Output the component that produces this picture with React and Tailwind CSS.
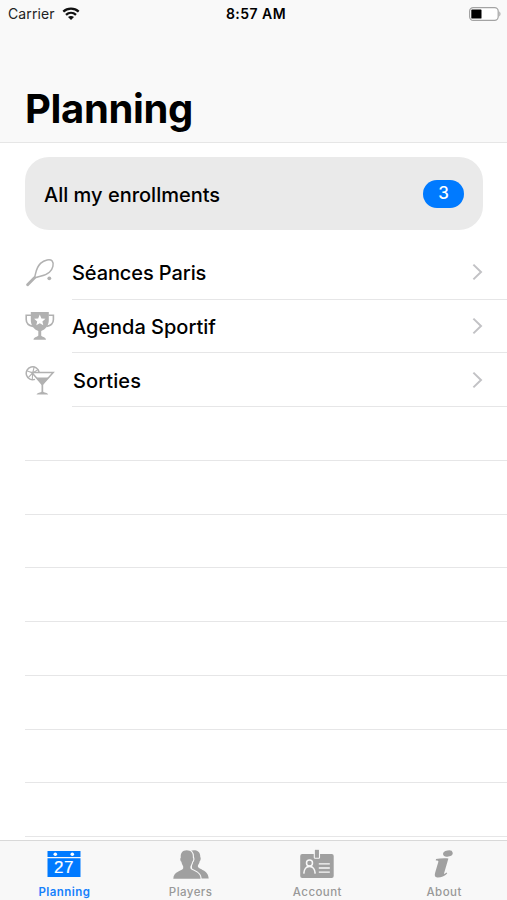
import React, { useState } from "react";

const RacketIcon = () => (
  <svg width="30" height="30" viewBox="0 0 30 30" fill="none" stroke="#b1b1b1">
    <path
      d="M9.2 20.2C11.2 16 10.2 10.8 15.5 5.4C19.5 1.7 25.2 .8 27.2 3C29.2 5.4 28 11 24.4 14.2C19.4 18.6 14.4 17.6 9.2 20.2Z"
      strokeWidth="1.5"
    />
    <path d="M9.5 19.7L2.6 26.8" strokeWidth="2.9" strokeLinecap="round" />
    <circle cx="24.3" cy="20.3" r="1.9" fill="#b1b1b1" stroke="none" />
  </svg>
);

const TrophyIcon = () => (
  <svg width="30" height="30" viewBox="0 0 30 30" fill="#b1b1b1">
    <path d="M5.8 1H23.8V9C23.8 14.5 20.5 18.5 16.2 20V24.5C16.4 26 20.8 25.6 21 28.7H8.5C8.7 25.6 13 26 13.3 24.5V20C9 18.5 5.8 14.5 5.8 9Z" />
    <path
      d="M6 4.2H1.2V8.5C1.2 12.5 4 14.6 8 15.4M23.6 4.2H28.4V8.5C28.4 12.5 25.6 14.6 21.6 15.4"
      fill="none"
      stroke="#b1b1b1"
      strokeWidth="1.6"
    />
    <path
      d="M14.8 3.6L16.4 7.4L20.5 7.7L17.4 10.4L18.3 14.3L14.8 12.2L11.3 14.3L12.2 10.4L9.1 7.7L13.2 7.4Z"
      fill="#fff"
    />
  </svg>
);

const CocktailIcon = () => (
  <svg width="30" height="31" viewBox="0 0 30 31" fill="none" stroke="#b1b1b1" strokeWidth="1.5">
    <path d="M10 14.4A6.5 6.5 0 1 1 14.1 7" />
    <path d="M7.7 8L1.8 5.8M7.7 8L9.2 1.8M7.7 8L3.2 12.6M7.7 8L13 4.6M7.7 8L7.3 14.2" strokeWidth="1.1" />
    <path d="M6.8 7.4H28.2L17.3 19.6Z" fill="#fff" />
    <path d="M11 12.6H23.8L18.2 19.3V26.5C18.5 27.8 23 27.6 23.2 29.6H11.6C11.8 27.6 16.2 27.8 16.5 26.5V19.3Z" fill="#b1b1b1" stroke="none" />
  </svg>
);

const CalendarIcon = () => (
  <svg width="34" height="30" viewBox="0 0 34 30">
    <path d="M.5 2H33.5V8H.5ZM.5 9.2H33.5V28H.5Z" fill="#007aff" />
    <circle cx="8.3" cy="5.3" r="1.8" fill="#fff" />
    <circle cx="25.3" cy="5.3" r="1.8" fill="#fff" />
    <text
      x="17"
      y="24"
      textAnchor="middle"
      fill="#fff"
      fontSize="17"
      fontWeight="400"
      fontFamily="Liberation Sans, Arial, sans-serif"
      stroke="#fff"
      strokeWidth=".2"
    >
      27
    </text>
  </svg>
);

const PlayersIcon = () => (
  <svg width="36" height="30" viewBox="0 0 36 30" fill="#a0a0a0">
    <path d="M17.5 2C21 .6 27.5 1 27.3 8C28.2 9 27.6 11.5 26.7 12.3C26.5 14.5 25 16 24.8 17C24.8 20.5 35.5 20.5 35.7 29.5H20Z" />
    <path
      d="M13.7 1.2C18 1.2 20.3 4 19.8 8.4C20.8 9.4 20.3 12 19.2 12.7C18.9 15 17.6 16.4 17.4 17.5V19.3C18.5 22.2 27.4 22 27.6 29.7H.3C.4 22.2 9.4 22.2 10.2 19.3V17.5C9.8 16.2 8.7 15 8.4 12.7C7.2 12 6.8 9.3 7.8 8.4C7.3 4 9.6 1.2 13.7 1.2Z"
      stroke="#f8f8f8"
      strokeWidth="2.2"
      paintOrder="stroke"
    />
  </svg>
);

const AccountIcon = () => (
  <svg width="34" height="30" viewBox="0 0 34 30" fill="none">
    <rect x=".2" y="4.9" width="33.5" height="24.2" rx="2" fill="#a0a0a0" />
    <rect x="14.3" y=".2" width="5.2" height="9" rx=".8" fill="#a0a0a0" stroke="#f8f8f8" strokeWidth="1.1" />
    <circle cx="9.5" cy="13.9" r="3" stroke="#f8f8f8" strokeWidth="1.5" />
    <path d="M3.8 24.6C4 20.4 6.2 17.4 9.5 17.4S15 20.4 15.2 24.6" stroke="#f8f8f8" strokeWidth="1.6" />
    <path d="M18.8 14.9H29.8M18.8 19H29.8M18.8 23.2H29.8" stroke="#f8f8f8" strokeWidth="1.3" />
  </svg>
);

const AboutIcon = () => (
  <svg width="34" height="30" viewBox="0 0 34 30" fill="#a0a0a0">
    <ellipse cx="20.9" cy="4.5" rx="4.9" ry="3" transform="rotate(-10 20.9 4.5)" />
    <path d="M9 10C12.5 9.5 16.5 8.9 21.4 9.5L17.1 24.3C16.9 25.3 17.6 25.1 19.6 23.6L20.2 24.4C17.6 27.2 14 28.6 10.5 28.5C7.5 28.3 7.5 26 8.2 23.5L11.3 13C11.8 11.5 10.6 11.6 8.8 11.5Z" />
  </svg>
);

const WifiIcon = () => (
  <svg width="18" height="14" viewBox="0 0 18 14" fill="none" stroke="#111" strokeWidth="2.3">
    <path d="M1.3 4.6C5.6 .7 12.4 .7 16.7 4.6" />
    <path d="M4 7.9C6.9 5.2 11.1 5.2 14 7.9" />
    <path d="M9 13L6 10C7.6 8.6 10.4 8.6 12 10Z" fill="#111" stroke="none" />
  </svg>
);

const BatteryIcon = () => (
  <svg width="32" height="14" viewBox="0 0 32 14">
    <rect x=".6" y=".6" width="28.6" height="12.8" rx="3.6" fill="#fff" stroke="#a3a3a3" strokeWidth="1.2" />
    <rect x="2.3" y="2.4" width="10.2" height="9.2" rx=".7" fill="#000" />
    <path d="M30.3 4.6C31.8 5.2 31.8 8.8 30.3 9.4Z" fill="#a3a3a3" />
  </svg>
);

const Chevron = () => (
  <svg width="12" height="18" viewBox="0 0 12 18" fill="none" stroke="#c2c2c5" strokeWidth="2">
    <path d="M1.4 1.6L9 9L1.4 16.4" />
  </svg>
);

const categories = [
  { id: 1, name: "Séances Paris", icon: <RacketIcon />, label: "tracking-[-0.1px]" },
  { id: 2, name: "Agenda Sportif", icon: <TrophyIcon />, label: "tracking-[-0.02px]" },
  { id: 3, name: "Sorties", icon: <CocktailIcon />, label: "tracking-[0.08px] pl-px" },
];

const emptyRows = [1, 2, 3, 4, 5, 6, 7, 8];

const tabs = [
  { name: "Planning", icon: <CalendarIcon /> },
  { name: "Players", icon: <PlayersIcon /> },
  { name: "Account", icon: <AccountIcon /> },
  { name: "About", icon: <AboutIcon /> },
];

const App = () => {
  const [activeTab, setActiveTab] = useState("Planning");

  return (
    <div className="flex h-[900px] w-[507px] flex-col overflow-hidden bg-white font-['Inter',sans-serif] text-black">
      {/* Header */}
      <header className="h-[143px] shrink-0 border-b border-[#e6e6e6] bg-[#f9f9f9]">
        <div className="grid h-[27px] grid-cols-3 items-center pr-[6px] pl-[8px]">
          <div className="flex items-center gap-[7px]">
            <span className="text-[14px] tracking-[0.1px] text-[#222]">Carrier</span>
            <WifiIcon />
          </div>
          <span className="pl-[3px] text-center text-[14px] font-semibold tracking-[0.45px]">8:57 AM</span>
          <div className="flex justify-end">
            <BatteryIcon />
          </div>
        </div>
        <h1 className="mt-[57px] pl-[25px] text-[40px] leading-[50px] font-bold tracking-[-0.35px]">Planning</h1>
      </header>

      {/* Enrollments and categories */}
      <main className="min-h-0 flex-1 overflow-hidden">
        <button className="mt-[14px] ml-[25px] flex h-[73px] w-[458px] items-center justify-between rounded-[24px] bg-[#eaeaea] pr-[19px] pl-[19px]">
          <span className="pt-[2px] text-[20px] font-medium">All my enrollments</span>
          <span className="flex h-[28px] w-[41px] items-center justify-center rounded-full bg-[#007aff] text-[17px] font-medium text-white">
            3
          </span>
        </button>

        <ul className="mt-[15.75px] pl-[25px]">
          {categories.map((category) => (
            <li key={category.id} className="flex h-[53.75px]">
              <div className="flex w-[47px] items-center">{category.icon}</div>
              <div className="flex flex-1 items-center justify-between border-b border-[#e6e6e7] pr-[23px]">
                <span className={`pt-[2px] text-[20px] font-medium ${category.label}`}>{category.name}</span>
                <Chevron />
              </div>
            </li>
          ))}
          {emptyRows.map((row) => (
            <li key={row} className="h-[53.75px] border-b border-[#e6e6e7]" />
          ))}
        </ul>
      </main>

      {/* Tab bar */}
      <nav className="grid h-[60px] shrink-0 grid-cols-4 border-t border-[#d9d9d9] bg-[#f8f8f8]">
        {tabs.map((tab) => (
          <button
            key={tab.name}
            onClick={() => setActiveTab(tab.name)}
            className={`flex flex-col items-center pt-[8px] pl-[1px] text-[11.5px] leading-[16px] font-medium tracking-[0.45px] ${
              activeTab === tab.name ? "pl-[2px] font-semibold text-[#1681fc]" : "text-[#999]"
            }`}
          >
            {tab.icon}
            <span className="mt-[5px]">{tab.name}</span>
          </button>
        ))}
      </nav>
    </div>
  );
};

export default App;
